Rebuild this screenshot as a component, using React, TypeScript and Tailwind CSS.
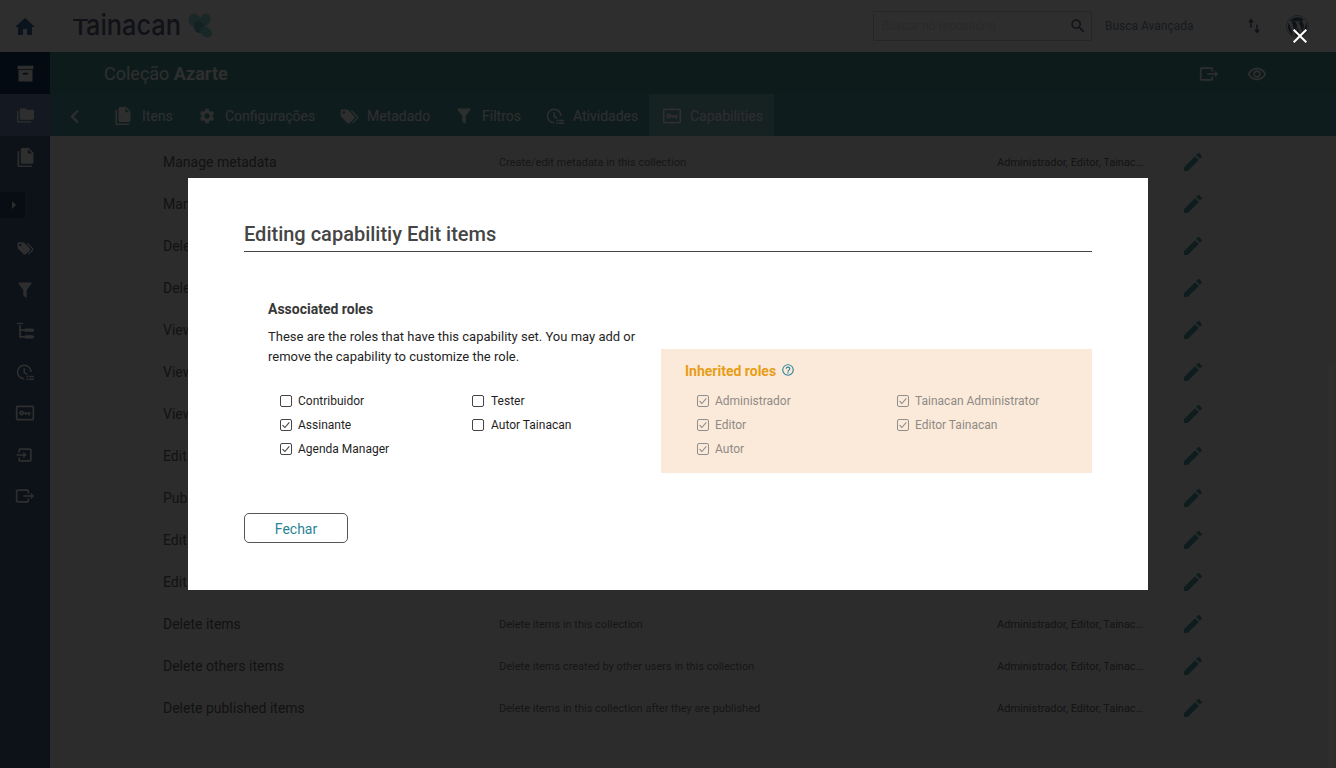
import React from "react";
import { FaWordpress } from "react-icons/fa";

const P = {
  home: "M10 20v-6h4v6h5v-8h3L12 3 2 12h3v8z",
  archive: "M3,3H21V7H3V3M4,8H20V21H4V8M9.5,11A0.5,0.5 0 0,0 9,11.5V13H15V11.5A0.5,0.5 0 0,0 14.5,11H9.5Z",
  folders: "M22,4H14L12,2H6A2,2 0 0,0 4,4V16A2,2 0 0,0 6,18H22A2,2 0 0,0 24,16V6A2,2 0 0,0 22,4M2,6H0V20A2,2 0 0,0 2,22H20V20H2V6Z",
  items: "M15,7H20.5L15,1.5V7M8,0H16L22,6V18A2,2 0 0,1 20,20H8C6.89,20 6,19.1 6,18V2A2,2 0 0,1 8,0M4,4V22H20V24H4A2,2 0 0,1 2,22V4H4Z",
  cog: "M19.14 12.94c.04-.3.06-.61.06-.94 0-.32-.02-.64-.07-.94l2.03-1.58c.18-.14.23-.41.12-.61l-1.92-3.32c-.12-.22-.37-.29-.59-.22l-2.39.96c-.5-.38-1.03-.7-1.62-.94l-.36-2.54c-.04-.24-.24-.41-.48-.41h-3.84c-.24 0-.43.17-.47.41l-.36 2.54c-.59.24-1.13.57-1.62.94l-2.39-.96c-.22-.08-.47 0-.59.22L2.74 8.87c-.12.21-.08.47.12.61l2.03 1.58c-.05.3-.09.63-.09.94s.02.64.07.94l-2.03 1.58c-.18.14-.23.41-.12.61l1.92 3.32c.12.22.37.29.59.22l2.39-.96c.5.38 1.03.7 1.62.94l.36 2.54c.05.24.24.41.48.41h3.84c.24 0 .44-.17.47-.41l.36-2.54c.59-.24 1.13-.56 1.62-.94l2.39.96c.22.08.47 0 .59-.22l1.92-3.32c.12-.22.07-.47-.12-.61l-2.01-1.58zM12 15.6c-1.98 0-3.6-1.62-3.6-3.6s1.62-3.6 3.6-3.6 3.6 1.62 3.6 3.6-1.62 3.6-3.6 3.6z",
  tags: "M5.5,9A1.5,1.5 0 0,0 7,7.5A1.5,1.5 0 0,0 5.5,6A1.5,1.5 0 0,0 4,7.5A1.5,1.5 0 0,0 5.5,9M17.41,11.58C17.77,11.94 18,12.44 18,13C18,13.55 17.78,14.05 17.41,14.41L12.41,19.41C12.05,19.77 11.55,20 11,20C10.45,20 9.95,19.78 9.58,19.41L2.59,12.42C2.22,12.05 2,11.55 2,11V6C2,4.89 2.89,4 4,4H9C9.55,4 10.05,4.22 10.41,4.58L17.41,11.58M13.54,5.71L14.54,4.71L21.41,11.58C21.78,11.94 22,12.45 22,13C22,13.55 21.78,14.05 21.42,14.41L16.04,19.79L15.04,18.79L20.75,13L13.54,5.71Z",
  filter: "M14,12V19.88C14.04,20.18 13.94,20.5 13.71,20.71C13.32,21.1 12.69,21.1 12.3,20.71L10.29,18.7C10.06,18.47 9.96,18.16 10,17.87V12H9.97L4.21,4.62C3.87,4.19 3.95,3.56 4.38,3.22C4.57,3.08 4.78,3 5,3H19C19.22,3 19.43,3.08 19.62,3.22C20.05,3.56 20.13,4.19 19.79,4.62L14.03,12H14Z",
  tree: "M3,2H9A1,1 0 0,1 9,4H3A1,1 0 0,1 3,2M5,5H7V10H11V12H7V18H11V20H5V5M13,9H21A2,2 0 0,1 21,13H13A2,2 0 0,1 13,9M13,17H21A2,2 0 0,1 21,21H13A2,2 0 0,1 13,17Z",
  activity: "M11,2A10,10 0 0,1 21,12H19A8,8 0 1,0 11,20V22A10,10 0 0,1 11,2M10,7H12V12.2L15.5,14.3L14.5,15.9L10,13.2V7M14,17H16V19H14V17M17,17H24V19H17V17M14,20.5H16V22.5H14V20.5M17,20.5H24V22.5H17V20.5Z",
  key: "M3,3H21A2,2 0 0,1 23,5V19A2,2 0 0,1 21,21H3A2,2 0 0,1 1,19V5A2,2 0 0,1 3,3M3,5V19H21V5H3M8,9A3,3 0 0,1 10.83,11H19V13H18V15H16V13H14V14.5H12V13H10.83A3,3 0 1,1 8,9M8,11A1,1 0 1,0 8,13A1,1 0 1,0 8,11Z",
  importIcon: "M14,12L10,8V11H2V13H10V16M20,18V6C20,4.89 19.1,4 18,4H6A2,2 0 0,0 4,6V9H6V6H18V18H6V15H4V18A2,2 0 0,0 6,20H18A2,2 0 0,0 20,18Z",
  exportIcon: "M23,12L19,8V11H10V13H19V16M1,18V6C1,4.89 1.9,4 3,4H15A2,2 0 0,1 17,6V9H15V6H3V18H15V15H17V18A2,2 0 0,1 15,20H3A2,2 0 0,1 1,18Z",
  eye: "M12 6.5c3.79 0 7.17 2.13 8.82 5.5-1.65 3.37-5.02 5.5-8.82 5.5S4.83 15.37 3.18 12C4.83 8.63 8.21 6.5 12 6.5m0-2C7 4.5 2.73 7.61 1 12c1.73 4.39 6 7.5 11 7.5s9.27-3.11 11-7.5C21.27 7.61 17 4.5 12 4.5zm0 5c1.38 0 2.5 1.12 2.5 2.5s-1.12 2.5-2.5 2.5-2.5-1.12-2.5-2.5 1.12-2.5 2.5-2.5m0-2c-2.48 0-4.5 2.02-4.5 4.5s2.02 4.5 4.5 4.5 4.5-2.02 4.5-4.5-2.02-4.5-4.5-4.5z",
  pencil: "M20.71,7.04C21.1,6.65 21.1,6 20.71,5.63L18.37,3.29C18,2.9 17.35,2.9 16.96,3.29L15.12,5.12L18.87,8.87M3,17.25V21H6.75L17.81,9.93L14.06,6.18L3,17.25Z",
  magnify: "M9.5,3A6.5,6.5 0 0,1 16,9.5C16,11.11 15.41,12.59 14.44,13.73L14.71,14H15.5L20.5,19L19,20.5L14,15.5V14.71L13.73,14.44C12.59,15.41 11.11,16 9.5,16A6.5,6.5 0 0,1 3,9.5A6.5,6.5 0 0,1 9.5,3M9.5,5C7,5 5,7 5,9.5C5,12 7,14 9.5,14C12,14 14,12 14,9.5C14,7 12,5 9.5,5Z",
  swap: "M8,2L12,7H9V14H7V7H4L8,2M15,10H17V17H20L16,22L12,17H15V10Z",
  help: "M11,18H13V16H11V18M12,2A10,10 0 0,0 2,12A10,10 0 0,0 12,22A10,10 0 0,0 22,12A10,10 0 0,0 12,2M12,20C7.59,20 4,16.41 4,12C4,7.59 7.59,4 12,4C16.41,4 20,7.59 20,12C20,16.41 16.41,20 12,20M12,6A4,4 0 0,0 8,10H10A2,2 0 0,1 12,8A2,2 0 0,1 14,10C14,12 11,11.75 11,15H13C13,12.75 16,12.5 16,10A4,4 0 0,0 12,6Z",
  close: "M19,6.41L17.59,5L12,10.59L6.41,5L5,6.41L10.59,12L5,17.59L6.41,19L12,13.41L17.59,19L19,17.59L13.41,12L19,6.41Z",
};

function Icon({ d, className }: { d: string; className: string }) {
  return (
    <svg viewBox="0 0 24 24" className={className} fill="currentColor" aria-hidden="true">
      <path d={d} />
    </svg>
  );
}

const sideItems: { d: string; bg: string; size: string }[] = [
  { d: P.archive, bg: "bg-[#113764]", size: "w-[21px] h-[21px]" },
  { d: P.folders, bg: "bg-[#6f85b2]", size: "w-[17px] h-[17px]" },
  { d: P.items, bg: "", size: "w-[19px] h-[19px]" },
];
const sideLower: { d: string; size: string }[] = [
  { d: P.tags, size: "w-[19px] h-[19px]" },
  { d: P.filter, size: "w-[20px] h-[20px]" },
  { d: P.tree, size: "w-[20px] h-[20px]" },
  { d: P.activity, size: "w-[18px] h-[18px]" },
  { d: P.key, size: "w-[20px] h-[20px]" },
  { d: P.importIcon, size: "w-[20px] h-[20px]" },
  { d: P.exportIcon, size: "w-[20px] h-[20px]" },
];

const tabs = [
  { d: P.items, label: "Itens", w: "w-[84px]", gap: "gap-[10px]", size: "h-[18px] w-[18px]" },
  { d: P.cog, label: "Configurações", w: "w-[141px]", gap: "gap-[9px]", size: "h-[18px] w-[18px]" },
  { d: P.tags, label: "Metadado", w: "w-[115px]", gap: "gap-[7px]", size: "h-[21px] w-[21px]" },
  { d: P.filter, label: "Filtros", w: "w-[92px]", gap: "gap-[8px]", size: "h-[20px] w-[20px]" },
  { d: P.activity, label: "Atividades", w: "w-[103px]", gap: "gap-[9px]", size: "h-[18px] w-[18px]" },
];

const rows = [
  ["Manage metadata", "Create/edit metadata in this collection"],
  ["Manage filters", "Create/edit filters in this collection"],
  ["Delete metadata", "Delete metadata in this collection"],
  ["Delete filters", "Delete filters in this collection"],
  ["View private items", "View private items in this collection"],
  ["View private metadata", "View private metadata in this collection"],
  ["View private filters", "View private filters in this collection"],
  ["Edit items", "Edit items in this collection"],
  ["Publish items", "Publish items in this collection"],
  ["Edit others items", "Edit items created by other users"],
  ["Edit published items", "Edit published items in this collection"],
  ["Delete items", "Delete items in this collection"],
  ["Delete others items", "Delete items created by other users in this collection"],
  ["Delete published items", "Delete items in this collection after they are published"],
];

function Box({ checked, muted }: { checked?: boolean; muted?: boolean }) {
  return (
    <span
      className={`flex h-[12px] w-[12px] shrink-0 items-center justify-center rounded-[2px] border ${
        muted ? "border-[#8f8f8f]" : "border-[#454545]"
      }`}
    >
      {checked && (
        <svg viewBox="0 0 12 12" className="h-[10px] w-[10px]" fill="none" aria-hidden="true">
          <path d="M1.8 6.2 L4.6 9 L10 2.8" stroke={muted ? "#8f8f8f" : "#454545"} strokeWidth="1.3" />
        </svg>
      )}
    </span>
  );
}

function Role({ label, checked, muted, gap }: { label: string; checked?: boolean; muted?: boolean; gap: string }) {
  return (
    <div className={`flex h-[24px] items-center ${gap} text-[12px] ${muted ? "text-[#8f8a85]" : "text-[#1f1f1f]"}`}>
      <Box checked={checked} muted={muted} />
      <span>{label}</span>
    </div>
  );
}

export default function App() {
  return (
    <div className="relative flex h-[768px] w-[1336px] flex-col overflow-hidden bg-white font-['Roboto',sans-serif]">
      <header className="flex h-[52px] shrink-0 items-center bg-white">
        <div className="flex h-full w-[50px] items-center justify-center pt-[2px] text-[#3f6a9a]">
          <Icon d={P.home} className="h-[24px] w-[24px]" />
        </div>
        <div className="ml-[22px] flex items-center">
          <div className="-mt-[3px] flex h-[26px] w-[115px] items-baseline font-['Inter',sans-serif] font-medium leading-none text-[#5a6480]">
            <span className="inline-block w-[16px] origin-left scale-x-[1.2] text-[21.5px] leading-[26px]">T</span>
            <span className="inline-block origin-left scale-x-[0.89] text-[28.5px] leading-[26px]">ainacan</span>
          </div>
          <svg viewBox="0 0 26 26" className="h-[26px] w-[26px]" aria-hidden="true">
            <ellipse cx="8" cy="8" rx="6" ry="7.5" fill="#8fd6d6" transform="rotate(-30 8 8)" />
            <ellipse cx="18" cy="7" rx="5" ry="7" fill="#8fd6d6" transform="rotate(30 18 7)" />
            <ellipse cx="12" cy="14" rx="5" ry="6" fill="#6ab8c0" />
            <ellipse cx="19" cy="19" rx="6.5" ry="5" fill="#8fd6d6" transform="rotate(35 19 19)" />
          </svg>
        </div>
        <div className="ml-auto flex h-[30px] w-[219px] items-center justify-between rounded-[1px] border border-[#d2d2d2] pl-[8px] pr-[4px]">
          <span className="text-[12px] text-[#e0e0e0]">Buscar no repositório</span>
          <Icon d={P.magnify} className="h-[18px] w-[18px] text-[#55667f]" />
        </div>
        <span className="ml-[13px] w-[129px] text-[12px] text-[#808ea8]">Busca Avançada</span>
        <Icon d={P.swap} className="ml-[11px] h-[18px] w-[18px] text-[#55667f]" />
        <FaWordpress className="ml-[23px] mr-[27px] h-[23px] w-[23px] text-[#55667f]" />
      </header>

      <div className="flex min-h-0 flex-1">
        <aside className="flex w-[50px] shrink-0 flex-col bg-[#48648b] text-white">
          {sideItems.map((s, i) => (
            <div key={i} className={`flex h-[42px] items-center justify-center pt-[1px] ${s.bg}`}>
              <Icon d={s.d} className={s.size} />
            </div>
          ))}
          <div className="mt-[14px] flex h-[26px] w-[25px] items-center justify-center bg-[#2c486f]">
            <span className="ml-[2px] h-0 w-0 border-y-[4px] border-l-[4px] border-y-transparent border-l-[#f0f0f0]" />
          </div>
          <div className="mt-[10px] flex flex-col">
            {sideLower.map((s, i) => (
              <div key={i} className="flex h-[41.2px] items-center justify-center">
                <Icon d={s.d} className={s.size} />
              </div>
            ))}
          </div>
        </aside>

        <main className="flex min-w-0 flex-1 flex-col bg-[#f4f4f4]">
          <div className="flex h-[42px] shrink-0 items-center bg-[#489696] pl-[54px] pr-[69px] pt-[1px] text-white">
            <span className="text-[18px]">
              Coleção <b className="font-bold">Azarte</b>
            </span>
            <Icon d={P.exportIcon} className="ml-auto h-[20px] w-[20px]" />
            <Icon d={P.eye} className="ml-[28px] h-[20px] w-[20px]" />
          </div>
          <nav className="flex h-[42px] shrink-0 items-center bg-[#4e9d9f] text-[14px] text-white">
            <div className="flex w-[64px] items-center pl-[20px] pt-[2px]">
              <svg viewBox="0 0 12 20" className="h-[15px] w-[10px]" fill="none" stroke="currentColor" strokeWidth="3" aria-hidden="true">
                <path d="M10 2 L2 10 L10 18" />
              </svg>
            </div>
            {tabs.map((t) => (
              <div key={t.label} className={`flex ${t.w} items-center pt-[2px] ${t.gap}`}>
                <Icon d={t.d} className={`${t.size} shrink-0`} />
                <span>{t.label}</span>
              </div>
            ))}
            <div className="flex h-full w-[125px] items-center gap-[8px] bg-[#7ab8bd] pl-[13px] pt-[2px]">
              <Icon d={P.key} className="h-[20px] w-[20px] shrink-0" />
              <span>Capabilities</span>
            </div>
          </nav>
          <div className="pt-[5px]">
            {rows.map((r) => (
              <div key={r[0]} className="grid h-[42px] grid-cols-[336px_498px_184px_1fr] items-center pl-[113px]">
                <span className="text-[14px] text-[#646464]">{r[0]}</span>
                <span className="pt-[2px] text-[11px] text-[#7a7a7a]">{r[1]}</span>
                <span className="w-[147px] truncate pt-[2px] text-[11px] text-[#6a6a6a]">Administrador, Editor, Tainacan Administrator</span>
                <Icon d={P.pencil} className="h-[24px] w-[24px] text-[#4a9a9e]" />
              </div>
            ))}
          </div>
        </main>
      </div>

      <div className="absolute bottom-0 right-[2px] top-[365px] w-[6px] rounded-[3px] bg-white" />

      <div className="absolute inset-0 flex items-center justify-center bg-black/[.82]">
        <button className="absolute right-[24px] top-[24px] text-white" aria-label="close">
          <Icon d={P.close} className="h-[24px] w-[24px]" />
        </button>
        <section className="h-[412px] w-[960px] bg-white px-[56px] pt-[42px] text-[#1f1f1f]">
          <h2 className="h-[32px] border-b border-[#454545] text-[20px] font-medium leading-[28px] text-[#454545]">
            Editing capabilitiy Edit items
          </h2>
          <div className="flex">
            <div className="w-[417px] pl-[24px] pt-[47px]">
              <h3 className="text-[14px] font-bold leading-[20px] text-[#373737]">Associated roles</h3>
              <p className="mt-[8px] w-[380px] text-[13px] leading-[20px] text-[#1f1f1f]">
                These are the roles that have this capability set. You may add or remove the capability to customize the role.
              </p>
              <div className="mt-[22px] grid grid-cols-[192px_1fr] pl-[12px]">
                <Role label="Contribuidor" gap="gap-[6px]" />
                <Role label="Tester" gap="gap-[7px]" />
                <Role label="Assinante" checked gap="gap-[6px]" />
                <Role label="Autor Tainacan" gap="gap-[7px]" />
                <Role label="Agenda Manager" checked gap="gap-[6px]" />
              </div>
            </div>
            <div className="mt-[97px] h-[124px] w-[431px] bg-[#fbeada] pl-[24px] pt-[12px]">
              <h3 className="flex h-[20px] items-center text-[14px] font-bold text-[#e89d17]">
                Inherited roles
                <Icon d={P.help} className="mb-[3px] ml-[5px] h-[14px] w-[14px] text-[#298596]" />
              </h3>
              <div className="mt-[8px] grid grid-cols-[200px_1fr] pl-[12px]">
                <Role label="Administrador" checked muted gap="gap-[6px]" />
                <Role label="Tainacan Administrator" checked muted gap="gap-[6px]" />
                <Role label="Editor" checked muted gap="gap-[6px]" />
                <Role label="Editor Tainacan" checked muted gap="gap-[6px]" />
                <Role label="Autor" checked muted gap="gap-[6px]" />
              </div>
            </div>
          </div>
          <button className="mt-[40px] h-[30px] w-[104px] rounded-[5px] border border-[#555555] pt-[2px] text-[14px] text-[#298596]">
            Fechar
          </button>
        </section>
      </div>
    </div>
  );
}
